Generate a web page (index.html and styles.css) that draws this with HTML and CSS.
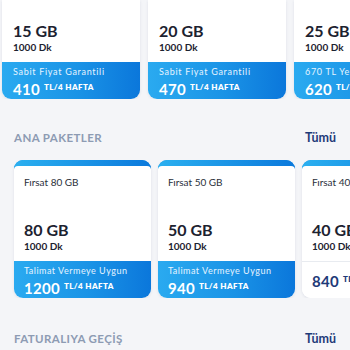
FILE: index.html
```html
<!DOCTYPE html>
<html lang="tr">
<head>
<meta charset="utf-8">
<link rel="stylesheet" href="styles.css">
</head>
<body>
<div class="row row-top">
  <div class="card">
    <div class="body">
      <div class="gb">15 GB</div>
      <div class="dk">1000 Dk</div>
    </div>
    <div class="band">
      <div class="sub">Sabit Fiyat Garantili</div>
      <div class="price">410 <span class="unit">TL/4 HAFTA</span></div>
    </div>
  </div>
  <div class="card">
    <div class="body">
      <div class="gb">20 GB</div>
      <div class="dk">1000 Dk</div>
    </div>
    <div class="band">
      <div class="sub">Sabit Fiyat Garantili</div>
      <div class="price">470 <span class="unit">TL/4 HAFTA</span></div>
    </div>
  </div>
  <div class="card">
    <div class="body">
      <div class="gb">25 GB</div>
      <div class="dk">1000 Dk</div>
    </div>
    <div class="band">
      <div class="sub">670 TL Yerine</div>
      <div class="price">620 <span class="unit">TL/4 HAFTA</span></div>
    </div>
  </div>
</div>

<div class="section-head first">
  <span class="title">ANA PAKETLER</span>
  <span class="all">Tümü</span>
</div>

<div class="row row-main">
  <div class="card pkg">
    <div class="body">
      <div class="name">Fırsat 80 GB</div>
      <div class="gb">80 GB</div>
      <div class="dk">1000 Dk</div>
    </div>
    <div class="band">
      <div class="sub">Talimat Vermeye Uygun</div>
      <div class="price">1200 <span class="unit">TL/4 HAFTA</span></div>
    </div>
  </div>
  <div class="card pkg">
    <div class="body">
      <div class="name">Fırsat 50 GB</div>
      <div class="gb">50 GB</div>
      <div class="dk">1000 Dk</div>
    </div>
    <div class="band">
      <div class="sub">Talimat Vermeye Uygun</div>
      <div class="price">940 <span class="unit">TL/4 HAFTA</span></div>
    </div>
  </div>
  <div class="card pkg">
    <div class="body">
      <div class="name">Fırsat 40 GB</div>
      <div class="gb">40 GB</div>
      <div class="dk">1000 Dk</div>
    </div>
    <div class="band plain">
      <div class="price">840 <span class="unit">TL/4 HAFTA</span></div>
    </div>
  </div>
</div>

<div class="section-head second">
  <span class="title">FATURALIYA GEÇİŞ</span>
  <span class="all">Tümü</span>
</div>
</body>
</html>
```

FILE: styles.css
```css
html, body {
  margin: 0;
  padding: 0;
}
body {
  background: #f4f5f8;
  font-family: "Lato", "Noto Sans", sans-serif;
  color: #1f2430;
  width: 350px;
  height: 350px;
  overflow: hidden;
}
.row {
  display: flex;
  overflow: hidden;
}
.row-top {
  padding-left: 2px;
  gap: 8px;
}
.row-main {
  padding-left: 14px;
  gap: 7px;
}
.card {
  flex: 0 0 138px;
  width: 138px;
  box-sizing: border-box;
  background: #fff;
  border-radius: 0 0 9px 9px;
  box-shadow: 0 1px 3px rgba(30, 50, 90, 0.10);
  display: flex;
  flex-direction: column;
}
.row-top .card {
  height: 99px;
}
.row-top .body {
  padding: 21px 0 0 11px;
  flex: 1;
}
.pkg {
  flex-basis: 137px;
  width: 137px;
  height: 138px;
  border-radius: 9px;
  border-top: 6px solid #1a93e6;
  background-clip: padding-box;
  position: relative;
}
.pkg::before {
  content: "";
  position: absolute;
  left: 0;
  right: 0;
  top: -6px;
  height: 9px;
  border-radius: 9px 9px 0 0;
  background: linear-gradient(90deg, #2bb0f0, #0b79dc);
}
.pkg .body {
  padding: 9px 0 0 10px;
  flex: 1;
  position: relative;
  background: #fff;
  border-radius: 4px 4px 0 0;
}
.name {
  font-size: 10px;
  line-height: 14px;
  color: #2a2f3a;
  margin-bottom: 31px;
}
.gb {
  font-size: 16px;
  line-height: 20px;
  font-weight: 700;
  color: #1c2230;
}
.dk {
  font-size: 10px;
  line-height: 13px;
  font-weight: 700;
  color: #1c2230;
}
.band {
  height: 37px;
  box-sizing: border-box;
  border-radius: 0 0 9px 9px;
  background: linear-gradient(90deg, #2aaaf0 0%, #1a93e6 55%, #0b77db 100%);
  padding: 4px 0 0 10px;
  color: #fff;
}
.row-top .band {
  padding-left: 11px;
}
.sub {
  font-size: 9px;
  line-height: 12px;
  letter-spacing: 0.5px;
  color: #e6f4ff;
  white-space: nowrap;
}
.row-top .sub {
  letter-spacing: 0.7px;
}
.price {
  font-size: 15px;
  line-height: 19px;
  font-weight: 700;
  white-space: nowrap;
  letter-spacing: 0.3px;
}
.unit {
  font-size: 8px;
  font-weight: 800;
  vertical-align: 5px;
  letter-spacing: 0.4px;
}
.band.plain {
  background: #fff;
  border-top: 1px solid #e8ebf0;
  color: #1e3a78;
  padding-top: 8px;
}
.section-head {
  display: flex;
  justify-content: space-between;
  align-items: center;
  padding: 0 14px;
  height: 16px;
}
.section-head.first {
  margin: 30px 0 15px;
}
.section-head.second {
  margin-top: 32px;
}
.title {
  font-size: 11.5px;
  font-weight: 700;
  letter-spacing: 0.4px;
  color: #8d9bb3;
}
.all {
  font-size: 12.5px;
  font-weight: 700;
  color: #1e3a78;
}
```
